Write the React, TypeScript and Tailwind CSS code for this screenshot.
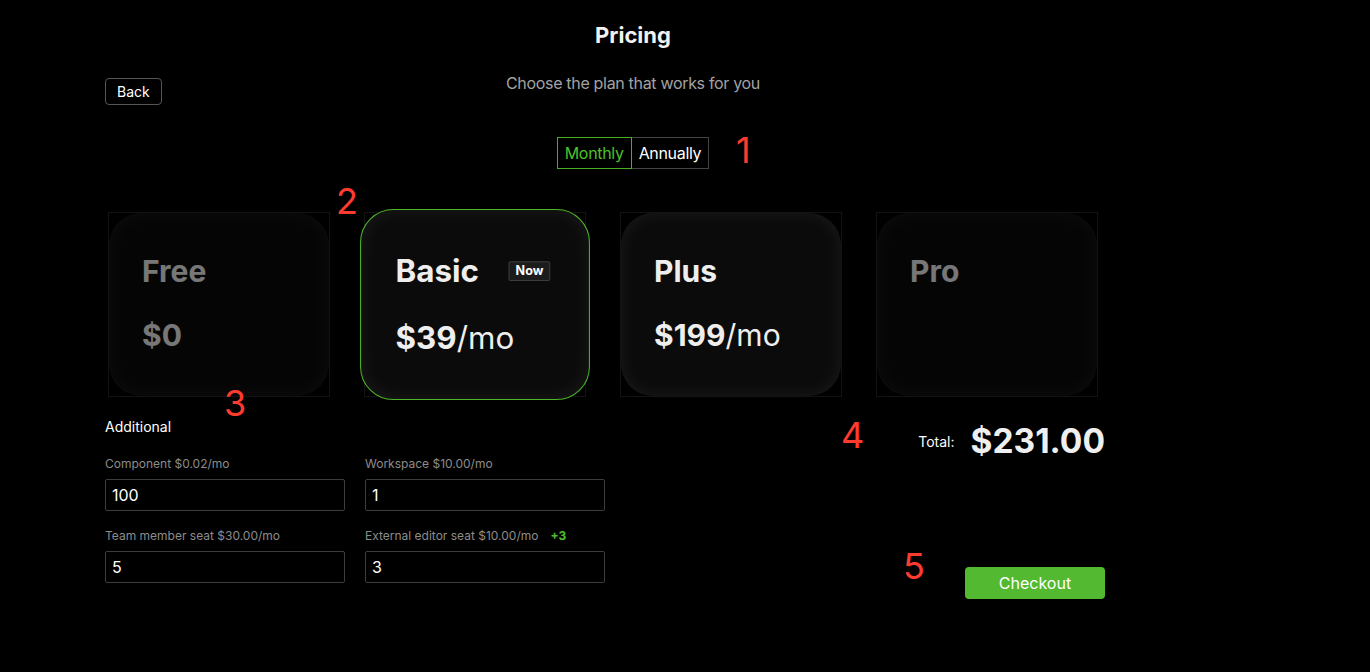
import React from "react";

type Plan = {
    name: string;
    price?: string;
    dim?: boolean;
    selected?: boolean;
};

const plans: Plan[] = [
    { name: "Free", price: "$0", dim: true },
    { name: "Basic", price: "$39", selected: true },
    { name: "Plus", price: "$199" },
    { name: "Pro", dim: true },
];

const PlanCard: React.FC<{ plan: Plan }> = ({ plan }) => {
    return (
        <div className="w-[222px] h-[185px] border border-[#131313]">
            <div
                className={
                    "w-full h-full rounded-[32px] bg-[#0b0b0b] shadow-[inset_0_0_18px_rgba(255,255,255,0.07)] pl-[33px] pt-[40px] " +
                    (plan.dim ? "opacity-50 " : "") +
                    (plan.selected ? "scale-[1.045] border border-[#4cb52a]" : "")
                }
            >
                <div className="flex items-center gap-7 h-[36px]">
                    <span className="text-[30px] leading-[36px] font-bold text-[#eeeeee]">{plan.name}</span>
                    {plan.selected && (
                        <span className="border border-[#3c3c3c] bg-[#1c1c1c] rounded-[2px] px-[6px] h-[19px] flex items-center text-[12px] font-bold text-white">
                            Now
                        </span>
                    )}
                </div>
                {plan.price && (
                    <div className="mt-[28px] text-[30px] leading-[36px] text-[#eeeeee]">
                        <span className="font-bold">{plan.price}</span>
                        {plan.price !== "$0" && <span>/mo</span>}
                    </div>
                )}
            </div>
        </div>
    );
};

const Field: React.FC<{ label: string; value: string; extra?: string }> = ({ label, value, extra }) => (
    <div className="w-[240px]">
        <div className="text-[12px] leading-[16px] text-[#8c8c8c] flex gap-3">
            <span>{label}</span>
            {extra && <span className="text-[#4cc02a] font-bold">{extra}</span>}
        </div>
        <input
            defaultValue={value}
            className="mt-[7px] w-full h-[32px] bg-black border border-[#3d3d3d] rounded-[2px] pl-[6px] text-[16px] text-white outline-none"
        />
    </div>
);

const App: React.FC = () => {
    return (
        <div className="relative w-full min-h-[672px] bg-black font-['Inter','Liberation_Sans',sans-serif] text-white">
            <div className="ml-[105px] w-[1056px] pt-[21px]">
                <h1 className="text-center text-[22px] leading-[28px] font-bold text-[#f2f2f2]">Pricing</h1>

                <div className="grid grid-cols-[1fr_auto_1fr] items-start mt-[24px]">
                    <div>
                        <button className="mt-[5px] h-[27px] px-[11px] border border-[#555] rounded-[4px] text-[14px] text-white">
                            Back
                        </button>
                    </div>
                    <p className="text-[16px] leading-[20px] tracking-[-0.02em] text-[#a3a3a3]">Choose the plan that works for you</p>
                    <div />
                </div>

                <div className="flex justify-center mt-[32px]">
                    <div className="flex h-[32px] text-[16px] tracking-[-0.02em]">
                        <button className="px-[7px] border border-[#46b025] text-[#4cc02a]">Monthly</button>
                        <button className="px-[7px] border border-l-0 border-[#444] text-white">Annually</button>
                    </div>
                </div>

                <div className="flex gap-[34px] mt-[43px] ml-[3px]">
                    {plans.map((p) => (
                        <PlanCard key={p.name} plan={p} />
                    ))}
                </div>

                <div className="flex justify-between w-[1000px] mt-[20px]">
                    <div>
                        <div className="text-[14px] leading-[20px] text-white">Additional</div>
                        <div className="grid grid-cols-[240px_240px] gap-x-[20px] gap-y-[17px] mt-[19px]">
                            <Field label="Component $0.02/mo" value="100" />
                            <Field label="Workspace $10.00/mo" value="1" />
                            <Field label="Team member seat $30.00/mo" value="5" />
                            <Field label="External editor seat $10.00/mo" value="3" extra="+3" />
                        </div>
                    </div>
                    <div className="flex flex-col items-end pt-[4px]">
                        <div className="flex items-center gap-[16px] h-[40px]">
                            <span className="text-[14px] text-white">Total:</span>
                            <span className="text-[33.5px] font-bold text-[#efefef]">$231.00</span>
                        </div>
                        <button className="mt-[106px] w-[140px] h-[32px] rounded-[4px] bg-[#53b931] text-[16px] text-white">
                            Checkout
                        </button>
                    </div>
                </div>
            </div>

            {/* annotation numbers */}
            <span className="absolute left-[736px] top-[130px] text-[36px] leading-[40px] text-[#ff3b2f]">1</span>
            <span className="absolute left-[336px] top-[181px] text-[36px] leading-[40px] text-[#ff3b2f]">2</span>
            <span className="absolute left-[224px] top-[383px] text-[36px] leading-[40px] text-[#ff3b2f]">3</span>
            <span className="absolute left-[841px] top-[415px] text-[36px] leading-[40px] text-[#ff3b2f]">4</span>
            <span className="absolute left-[903px] top-[546px] text-[36px] leading-[40px] text-[#ff3b2f]">5</span>
        </div>
    );
};

export default App;
